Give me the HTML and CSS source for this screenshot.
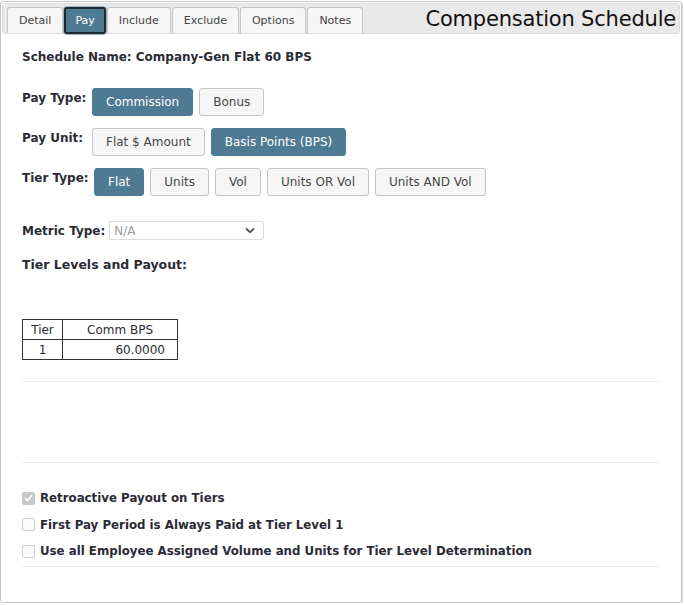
FILE: index.html
```html
<!DOCTYPE html>
<html>
<head>
    <meta charset="utf-8">
    <title>Compensation Schedule</title>
    <link rel="stylesheet" href="styles.css">
</head>
<body>
    <div class="panel">
        <div class="tab-bar">
            <ul class="tabs">
                <li class="tab">Detail</li>
                <li class="tab active">Pay</li>
                <li class="tab">Include</li>
                <li class="tab">Exclude</li>
                <li class="tab">Options</li>
                <li class="tab">Notes</li>
            </ul>
            <span class="title">Compensation Schedule</span>
        </div>
        <div class="content">
            <div class="sched-name">Schedule Name: Company-Gen Flat 60 BPS</div>

            <div class="row first">
                <span class="label">Pay Type:</span>
                <button class="btn on">Commission</button>
                <button class="btn">Bonus</button>
            </div>
            <div class="row">
                <span class="label">Pay Unit:</span>
                <button class="btn">Flat $ Amount</button>
                <button class="btn on">Basis Points (BPS)</button>
            </div>
            <div class="row">
                <span class="label tier">Tier Type:</span>
                <button class="btn on">Flat</button>
                <button class="btn">Units</button>
                <button class="btn">Vol</button>
                <button class="btn">Units OR Vol</button>
                <button class="btn">Units AND Vol</button>
            </div>

            <div class="metric">
                <span class="label">Metric Type:</span>
                <div class="select">
                    <span>N/A</span>
                    <svg width="10" height="7" viewBox="0 0 10 7"><path d="M1 1.5 L5 5.2 L9 1.5" fill="none" stroke="#555" stroke-width="1.8"/></svg>
                </div>
            </div>

            <h3 class="tiers-head">Tier Levels and Payout:</h3>

            <table class="tiers">
                <tr><th class="c1">Tier</th><th class="c2">Comm BPS</th></tr>
                <tr><td class="c1">1</td><td class="c2 num">60.0000</td></tr>
            </table>

            <hr class="sep one">
            <hr class="sep two">

            <label class="check"><span class="box checked"><svg width="9" height="8" viewBox="0 0 9 8"><path d="M1 4.2 L3.4 6.5 L8 1.2" fill="none" stroke="#fff" stroke-width="1.6"/></svg></span>Retroactive Payout on Tiers</label>
            <label class="check"><span class="box"></span>First Pay Period is Always Paid at Tier Level 1</label>
            <label class="check"><span class="box"></span>Use all Employee Assigned Volume and Units for Tier Level Determination</label>

            <hr class="sep three">
        </div>
    </div>
</body>
</html>
```

FILE: styles.css
```css
body{
    margin: 0;
    background-color: #ffffff;
    font-family: "DejaVu Sans", Verdana, sans-serif;
    color: #2b2b36;
}

.panel{
    width: 682px;
    height: 602px;
    margin: 1px 0 0 0;
    border: 1px solid #c5c5c5;
    border-radius: 3px;
    padding: 1px;
    box-sizing: border-box;
    box-shadow: 1px 1px 1px #d8d8d8;
}

.tab-bar{
    height: 31px;
    background-color: #e9e9e9;
    border: 1px solid #dddddd;
    border-radius: 3px;
    display: flex;
    align-items: flex-end;
    box-sizing: border-box;
}

.tabs{
    list-style: none;
    margin: 0 0 -1px 4px;
    padding: 0;
    display: flex;
    gap: 1px;
}

.tab{
    height: 26px;
    box-sizing: border-box;
    padding: 0 11px;
    line-height: 25px;
    font-size: 11px;
    background-color: #f6f6f6;
    border: 1px solid #c5c5c5;
    border-bottom: none;
    border-radius: 3px 3px 0 0;
    color: #454545;
}

.tab.active{
    background-color: #4f7a93;
    color: #ffffff;
    border: 2px solid #1f2a30;
    border-radius: 3px;
    height: 27px;
    line-height: 23px;
    padding: 0 9px;
    box-shadow: 0 0 0 1px #9fb5c2;
}

.title{
    margin-left: auto;
    margin-right: 3px;
    align-self: center;
    font-size: 21px;
    color: #111111;
    letter-spacing: -0.2px;
}

.content{
    padding: 16px 20px 0 20px;
}

.sched-name{
    font-size: 12px;
    font-weight: bold;
    height: 18px;
}

.row{
    display: flex;
    align-items: flex-start;
    margin-top: 12px;
    gap: 6px;
}

.row.first{
    margin-top: 20px;
}

.label{
    font-size: 12px;
    font-weight: bold;
    width: 64px;
    padding-top: 3px;
    white-space: nowrap;
}

.label.tier{
    margin-right: 2px;
}

.btn{
    height: 28px;
    font-family: "DejaVu Sans", Verdana, sans-serif;
    font-size: 12px;
    padding: 0 13px;
    background-color: #f6f6f6;
    border: 1px solid #c5c5c5;
    border-radius: 3px;
    color: #454545;
}

.btn.on{
    background-color: #4f7a93;
    border-color: #4f7a93;
    color: #ffffff;
}

.metric{
    display: flex;
    align-items: center;
    margin-top: 25px;
}

.metric .label{
    width: auto;
    padding-top: 0;
    margin-right: 4px;
}

.select{
    width: 155px;
    height: 19px;
    box-sizing: border-box;
    border: 1px solid #dddddd;
    border-radius: 2px;
    display: flex;
    align-items: center;
    justify-content: space-between;
    padding: 0 8px 0 4px;
    font-size: 12px;
    color: #999999;
}

.tiers-head{
    margin: 17px 0 0 0;
    font-size: 12.5px;
    font-weight: bold;
}

.tiers{
    margin-top: 47px;
    border-collapse: collapse;
    font-size: 12px;
}

.tiers th, .tiers td{
    border: 1px solid #333333;
    height: 19px;
    padding: 0;
    font-weight: normal;
}

.tiers .c1{
    width: 39px;
    text-align: center;
}

.tiers .c2{
    width: 102px;
}

.tiers .num{
    text-align: right;
    padding-right: 12px;
}

.sep{
    border: none;
    border-top: 1px solid #eeeeee;
    margin: 0;
    width: 640px;
}

.sep.one{
    margin-top: 21px;
}

.sep.two{
    margin-top: 80px;
    margin-bottom: 22px;
}

.sep.three{
    margin-top: 1px;
}

.check{
    display: flex;
    align-items: center;
    height: 26.5px;
    font-size: 11.8px;
    font-weight: bold;
}

.box{
    width: 13px;
    height: 13px;
    box-sizing: border-box;
    border: 1px solid #d0d0d0;
    border-radius: 2px;
    background-color: #fafafa;
    margin-right: 5px;
    display: flex;
    align-items: center;
    justify-content: center;
}

.box.checked{
    background-color: #c8c8c8;
    border-color: #c8c8c8;
}
```
